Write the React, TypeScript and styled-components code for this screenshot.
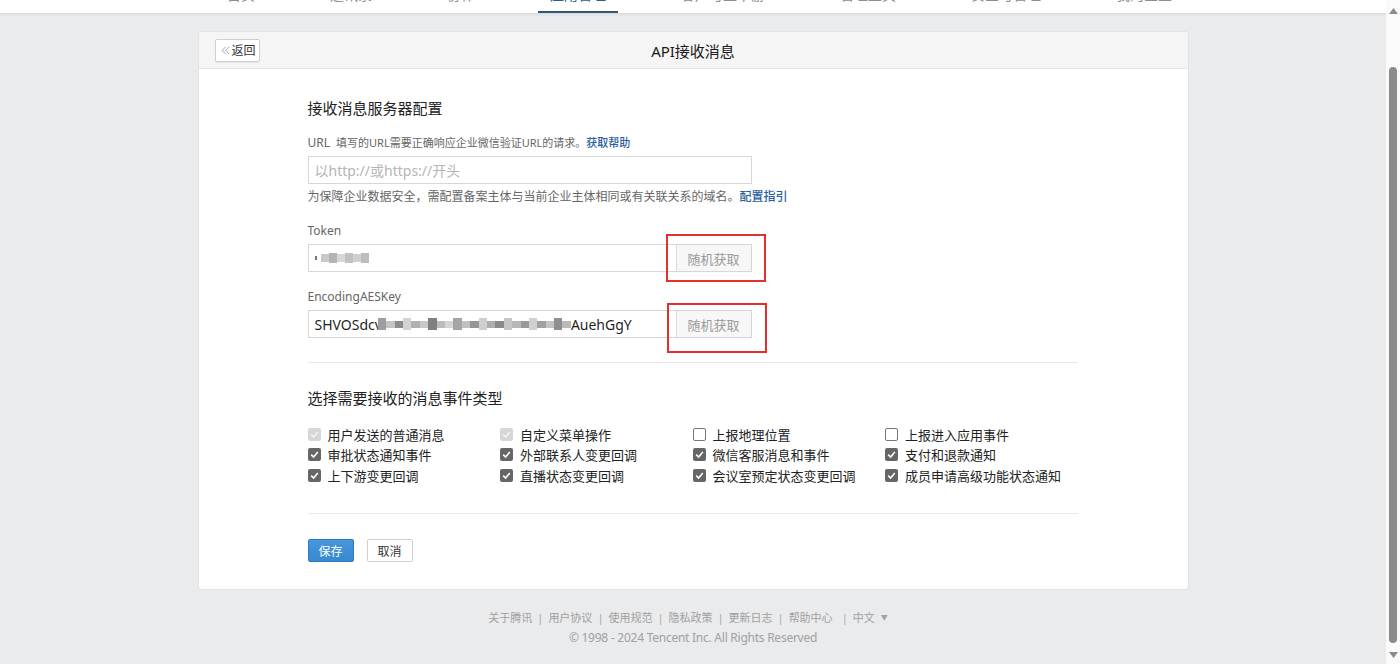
import * as React from "react";
import styled, { createGlobalStyle, css } from "styled-components";

const GlobalStyle = createGlobalStyle`
  html, body {
    margin: 0;
    padding: 0;
    height: 100%;
    overflow: hidden;
    background: #eaebed;
    font-family: "Noto Sans", "Noto Sans CJK SC", sans-serif;
  }
  * { box-sizing: border-box; }
`;

const Page = styled.div`
  display: flex;
  height: 664px;
`;

const Main = styled.div`
  flex: 1;
  display: flex;
  flex-direction: column;
  min-width: 0;
`;

const TopNav = styled.div`
  height: 14px;
  background: #fff;
  border-bottom: 1px solid #dcdcdc;
  box-shadow: 0 1px 2px rgba(0, 0, 0, 0.05);
  overflow: hidden;
`;

const TabRow = styled.div`
  display: flex;
  gap: 51px;
  margin-top: -16px;
  padding-left: 215px;
`;

const Tab = styled.div<{ $active?: boolean }>`
  height: 30px;
  padding: 0 12px;
  font-size: 14px;
  line-height: 22px;
  color: ${(p) => (p.$active ? "#2b5f93" : "#8a8f96")};
  border-bottom: 3px solid ${(p) => (p.$active ? "#2f5578" : "transparent")};
  white-space: nowrap;
`;

const Card = styled.div`
  width: 989px;
  margin: 18px auto 0;
  background: #fff;
  border-radius: 3px;
  box-shadow: 0 0 0 1px #e2e3e5;
  overflow: hidden;
`;

const CardHeader = styled.div`
  display: grid;
  grid-template-columns: 1fr auto 1fr;
  align-items: center;
  height: 37px;
  padding: 0 16px;
  background: #f5f5f5;
  border-bottom: 1px solid #e6e6e6;
`;

const BackButton = styled.button`
  justify-self: start;
  display: flex;
  align-items: center;
  gap: 2px;
  width: 45px;
  height: 23px;
  padding: 0 0 0 5px;
  border: 1px solid #cfcfcf;
  border-radius: 2px;
  background: #fff;
  box-shadow: 0 1px 1px rgba(0, 0, 0, 0.06);
  font-family: inherit;
  font-size: 12px;
  color: #333;
  cursor: pointer;
`;

const Title = styled.h1`
  margin: 0;
  font-size: 15px;
  font-weight: 400;
  color: #1a1a1a;
`;

const CardBody = styled.div`
  padding: 29px 110px 27px 109px;
`;

const SectionTitle = styled.h2`
  margin: 0;
  font-size: 15px;
  line-height: 20px;
  font-weight: 400;
  color: #222;
`;

const Field = styled.div<{ $top?: number }>`
  margin-top: ${(p) => p.$top ?? 16}px;
  position: relative;
`;

const Label = styled.div`
  font-size: 12px;
  line-height: 18px;
  color: #666;
  margin-bottom: 4px;
`;

const LabelHelp = styled.span`
  font-size: 11px;
  margin-left: 6px;
`;

const Hint = styled.div`
  font-size: 12px;
  line-height: 18px;
  color: #666;
  margin-top: 4px;
`;

const Link = styled.a`
  color: #2b5e9c;
  text-decoration: none;
  font-weight: 500;
`;

const InputGroup = styled.div`
  display: flex;
  width: 444px;
  height: 28px;
  border: 1px solid #d6d6d6;
  background: #fff;
`;

const TextInput = styled.div<{ $placeholder?: boolean }>`
  flex: 1;
  display: flex;
  align-items: center;
  padding: 0 6px;
  font-size: 14px;
  color: ${(p) => (p.$placeholder ? "#b5b5b5" : "#1f1f1f")};
  white-space: nowrap;
  overflow: hidden;
`;

const AddonButton = styled.button`
  width: 75px;
  height: 100%;
  border: none;
  border-left: 1px solid #dadada;
  background: #f7f7f7;
  font-family: inherit;
  font-size: 13px;
  color: #9a9a9a;
  cursor: pointer;
`;

const Blur = styled.span<{ $shift?: number }>`
  display: inline-flex;
  align-items: center;
  height: 14px;
  margin-left: ${(p) => p.$shift ?? 0}px;
`;

const Pixel = styled.span<{ $shade: string; $w: number; $h: number }>`
  display: inline-block;
  width: ${(p) => p.$w}px;
  height: ${(p) => p.$h}px;
  background: ${(p) => p.$shade};
`;

const Annotation = styled.div<{ $left: number; $top: number; $h: number }>`
  position: absolute;
  left: ${(p) => p.$left}px;
  top: ${(p) => p.$top}px;
  width: 100px;
  height: ${(p) => p.$h}px;
  border: 2px solid #e2302d;
  pointer-events: none;
`;

const Divider = styled.hr<{ $top: number; $bottom: number }>`
  border: none;
  border-top: 1px solid #e8e8e8;
  margin: ${(p) => p.$top}px 0 ${(p) => p.$bottom}px;
`;

const CheckGrid = styled.div`
  display: grid;
  grid-template-columns: repeat(4, 192.5px);
  row-gap: 0.5px;
  margin-top: 16px;
`;

const CheckItem = styled.label`
  display: flex;
  align-items: center;
  gap: 7px;
  height: 20px;
  font-size: 13px;
  color: #222;
`;

const Box = styled.span<{ $state: "on" | "off" | "locked" }>`
  display: inline-flex;
  align-items: center;
  justify-content: center;
  width: 13px;
  height: 13px;
  border-radius: 2px;
  ${(p) =>
    p.$state === "on"
      ? css`
          background: #666;
        `
      : p.$state === "locked"
      ? css`
          background: #d6d6d6;
        `
      : css`
          background: #fff;
          border: 1px solid #767676;
        `}
`;

const Actions = styled.div`
  display: flex;
  gap: 13px;
`;

const Button = styled.button<{ $primary?: boolean }>`
  width: 46px;
  height: 23px;
  border-radius: 2px;
  font-family: inherit;
  font-size: 12px;
  cursor: pointer;
  ${(p) =>
    p.$primary
      ? css`
          background: linear-gradient(#4596dd, #3a88cf);
          border: 1px solid #3079bf;
          color: #fff;
        `
      : css`
          background: #fff;
          border: 1px solid #cfcfcf;
          color: #333;
        `}
`;

const Footer = styled.footer`
  display: flex;
  flex-direction: column;
  align-items: center;
  margin-top: 19px;
  font-size: 12px;
  line-height: 20px;
  color: #a0a0a0;
`;

const FooterLinks = styled.div`
  display: flex;
  align-items: center;
  gap: 5px;
  font-size: 11px;
  margin-left: -10px;
`;

const Sep = styled.span<{ $wide?: boolean }>`
  color: #a8a8a8;
  margin-left: ${(p) => (p.$wide ? 4 : 0)}px;
`;

const Caret = styled.span`
  font-size: 7px;
  margin-left: 6px;
  vertical-align: 2px;
`;

const Copyright = styled.div`
  letter-spacing: -0.25px;
`;

const ScrollTrack = styled.div`
  width: 14px;
  display: flex;
  flex-direction: column;
  align-items: center;
  background: #fafafa;
  padding-top: 8px;
`;

const Thumb = styled.div`
  width: 8px;
  height: 576px;
  margin-top: 53px;
  border-radius: 4px;
  background: #8b8b8b;
`;

const ArrowIcon = ({ down }: { down?: boolean }) => (
  <svg width="9" height="6" viewBox="0 0 9 6" style={{ marginTop: down ? 9 : 0 }}>
    <path d={down ? "M0 0 L9 0 L4.5 6 Z" : "M0 6 L9 6 L4.5 0 Z"} fill="#8b8b8b" />
  </svg>
);

const DoubleChevron = () => (
  <svg width="9" height="9" viewBox="0 0 9 9">
    <path d="M4.5 1 L1.2 4.5 L4.5 8 M8 1 L4.7 4.5 L8 8" stroke="#9a9a9a" strokeWidth="0.9" fill="none" />
  </svg>
);

const CheckIcon = ({ color }: { color: string }) => (
  <svg width="9" height="9" viewBox="0 0 9 9">
    <path d="M1.2 4.6 L3.6 7 L7.8 2" stroke={color} strokeWidth="1.6" fill="none" />
  </svg>
);

const tabs = ["首页", "通讯录", "协作", "应用管理", "客户与上下游", "管理工具", "安全与管理", "我的企业"];

const events: { label: string; state: "on" | "off" | "locked" }[] = [
  { label: "用户发送的普通消息", state: "locked" },
  { label: "自定义菜单操作", state: "locked" },
  { label: "上报地理位置", state: "off" },
  { label: "上报进入应用事件", state: "off" },
  { label: "审批状态通知事件", state: "on" },
  { label: "外部联系人变更回调", state: "on" },
  { label: "微信客服消息和事件", state: "on" },
  { label: "支付和退款通知", state: "on" },
  { label: "上下游变更回调", state: "on" },
  { label: "直播状态变更回调", state: "on" },
  { label: "会议室预定状态变更回调", state: "on" },
  { label: "成员申请高级功能状态通知", state: "on" },
];

const tokenBlur = ["#c9c9c9", "#b4b4b4", "#d7d7d7", "#c2c2c2", "#cfcfcf", "#bdbdbd"];
const keyBlur = [
  "#9e9e9e", "#c4c4c4", "#8c8c8c", "#d2d2d2", "#b0b0b0", "#c8c8c8", "#7f7f7f", "#bcbcbc",
  "#d5d5d5", "#a5a5a5", "#c0c0c0", "#959595", "#cfcfcf", "#adadad", "#8a8a8a", "#c6c6c6",
  "#b7b7b7", "#9a9a9a", "#d0d0d0", "#a0a0a0", "#c3c3c3", "#8f8f8f", "#bababa",
];

const footerLinks = ["关于腾讯", "用户协议", "使用规范", "隐私政策", "更新日志", "帮助中心"];

export default function App() {
  return (
    <Page>
      <GlobalStyle />
      <Main>
        <TopNav>
          <TabRow>
            {tabs.map((t) => (
              <Tab key={t} $active={t === "应用管理"}>
                {t}
              </Tab>
            ))}
          </TabRow>
        </TopNav>

        <Card>
          <CardHeader>
            <BackButton>
              <DoubleChevron />
              返回
            </BackButton>
            <Title>API接收消息</Title>
            <span />
          </CardHeader>

          <CardBody>
            <SectionTitle>接收消息服务器配置</SectionTitle>

            <Field $top={16}>
              <Label>
                URL
                <LabelHelp>
                  填写的URL需要正确响应企业微信验证URL的请求。<Link href="#">获取帮助</Link>
                </LabelHelp>
              </Label>
              <InputGroup>
                <TextInput $placeholder>以http://或https://开头</TextInput>
              </InputGroup>
              <Hint>
                为保障企业数据安全，需配置备案主体与当前企业主体相同或有关联关系的域名。<Link href="#">配置指引</Link>
              </Hint>
            </Field>

            <Field>
              <Label>Token</Label>
              <InputGroup>
                <TextInput>
                  <Blur>
                    <Pixel $shade="#777" $w={2} $h={4} />
                    <Pixel $shade="transparent" $w={4} $h={10} />
                    {tokenBlur.map((s, i) => (
                      <Pixel key={i} $shade={s} $w={8} $h={i % 2 ? 10 : 8} />
                    ))}
                  </Blur>
                </TextInput>
                <AddonButton>随机获取</AddonButton>
              </InputGroup>
              <Annotation $left={358} $top={12} $h={48} />
            </Field>

            <Field>
              <Label>EncodingAESKey</Label>
              <InputGroup>
                <TextInput>
                  SHVOSdcv
                  <Blur $shift={-4}>
                    {keyBlur.map((s, i) => (
                      <Pixel key={i} $shade={s} $w={8.4} $h={i % 3 === 0 ? 12 : 7} />
                    ))}
                  </Blur>
                  AuehGgY
                </TextInput>
                <AddonButton>随机获取</AddonButton>
              </InputGroup>
              <Annotation $left={359} $top={15} $h={50} />
            </Field>

            <Divider $top={24} $bottom={25} />

            <SectionTitle>选择需要接收的消息事件类型</SectionTitle>
            <CheckGrid>
              {events.map((e) => (
                <CheckItem key={e.label}>
                  <Box $state={e.state}>
                    {e.state !== "off" && <CheckIcon color={e.state === "locked" ? "#f2f2f2" : "#fff"} />}
                  </Box>
                  {e.label}
                </CheckItem>
              ))}
            </CheckGrid>

            <Divider $top={28} $bottom={25} />

            <Actions>
              <Button $primary>保存</Button>
              <Button>取消</Button>
            </Actions>
          </CardBody>
        </Card>

        <Footer>
          <FooterLinks>
            {footerLinks.map((l, i) => (
              <React.Fragment key={l}>
                <span>{l}</span>
                <Sep $wide={i === footerLinks.length - 1}>|</Sep>
              </React.Fragment>
            ))}
            <span>
              中文<Caret>▼</Caret>
            </span>
          </FooterLinks>
          <Copyright>© 1998 - 2024 Tencent Inc. All Rights Reserved</Copyright>
        </Footer>
      </Main>

      <ScrollTrack>
        <ArrowIcon />
        <Thumb />
        <ArrowIcon down />
      </ScrollTrack>
    </Page>
  );
}
